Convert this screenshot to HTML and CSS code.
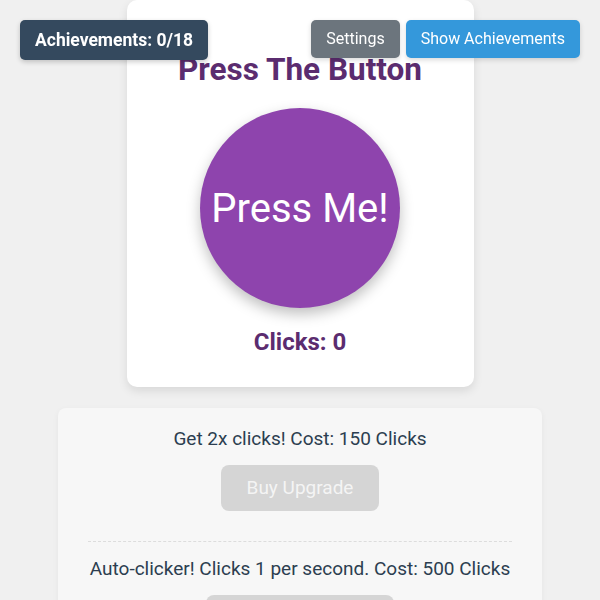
FILE: index.html
```html
<!DOCTYPE html>
<html lang="en">
<head>
    <meta charset="UTF-8">
    <meta name="viewport" content="width=device-width, initial-scale=1.0">
    <title>Press The Button</title>
    <link rel="stylesheet" href="styles.css">
</head>
<body>
    <div class="achievement-count">Achievements: 0/18</div>
    <div class="top-buttons">
        <button class="settings-btn">Settings</button>
        <button class="show-btn">Show Achievements</button>
    </div>

    <div class="game-card">
        <h1>Press The Button</h1>
        <button class="press-btn">Press Me!</button>
        <div class="clicks">Clicks: 0</div>
    </div>

    <div class="upgrades">
        <div class="upgrade">
            <p>Get 2x clicks! Cost: 150 Clicks</p>
            <button class="buy-btn" disabled>Buy Upgrade</button>
        </div>
        <div class="upgrade">
            <p>Auto-clicker! Clicks 1 per second. Cost: 500 Clicks</p>
            <button class="buy-btn" disabled>Buy Auto-clicker</button>
        </div>
    </div>
</body>
</html>
```

FILE: styles.css
```css
body {
    margin: 0;
    font-family: Roboto, 'Liberation Sans', sans-serif;
    background: #f0f0f0;
    color: #2c3e50;
    display: flex;
    flex-direction: column;
    align-items: center;
}
button {
    font-family: Roboto, 'Liberation Sans', sans-serif;
    border: none;
    cursor: pointer;
}
.achievement-count {
    position: fixed;
    top: 20px;
    left: 20px;
    background: #34495e;
    color: #fff;
    font-weight: bold;
    font-size: 17.5px;
    line-height: 20px;
    padding: 10px 15px;
    border-radius: 5px;
    box-shadow: 0px 2px 5px rgba(0, 0, 0, 0.2);
    z-index: 10;
}
.top-buttons {
    position: fixed;
    top: 20px;
    right: 20px;
    display: flex;
    gap: 6px;
    z-index: 10;
}
.top-buttons button {
    color: #fff;
    font-size: 16px;
    line-height: 20px;
    padding: 9px 15px;
    border-radius: 5px;
    box-shadow: 0px 2px 5px rgba(0, 0, 0, 0.15);
}
.settings-btn {
    background: #6c757d;
}
.show-btn {
    background: #3498db;
}
.game-card {
    background: #fff;
    width: 347px;
    box-sizing: border-box;
    border-radius: 10px;
    box-shadow: 0px 4px 10px rgba(0, 0, 0, 0.1);
    text-align: center;
    display: flex;
    flex-direction: column;
    align-items: center;
    padding: 0 20px 31px;
}
h1 {
    margin: 51px 0 0;
    font-size: 31.5px;
    line-height: 37px;
    color: #5b2c6f;
}
.press-btn {
    margin-top: 20px;
    width: 200px;
    height: 200px;
    border-radius: 50%;
    background: #8e44ad;
    color: #fff;
    font-size: 40px;
    box-shadow: 0px 6px 14px rgba(0, 0, 0, 0.25);
}
.clicks {
    margin-top: 20px;
    font-size: 24px;
    line-height: 28px;
    font-weight: bold;
    color: #5b2c6f;
}
.upgrades {
    margin-top: 21px;
    width: 484px;
    box-sizing: border-box;
    background: #f7f7f7;
    border-radius: 8px;
    padding: 20px 30px;
    box-shadow: 0px 2px 6px rgba(0, 0, 0, 0.05);
}
.upgrade {
    text-align: center;
    padding-bottom: 30px;
    margin-bottom: 16px;
    border-bottom: 1px dashed #ddd;
}
.upgrade p {
    margin: 0;
    font-size: 19px;
    line-height: 22px;
}
.buy-btn {
    margin-top: 15px;
    font-size: 19px;
    line-height: 22px;
    padding: 12px 26px;
    border-radius: 8px;
    background: #d5d5d5;
    color: #f4f4f4;
}
```
